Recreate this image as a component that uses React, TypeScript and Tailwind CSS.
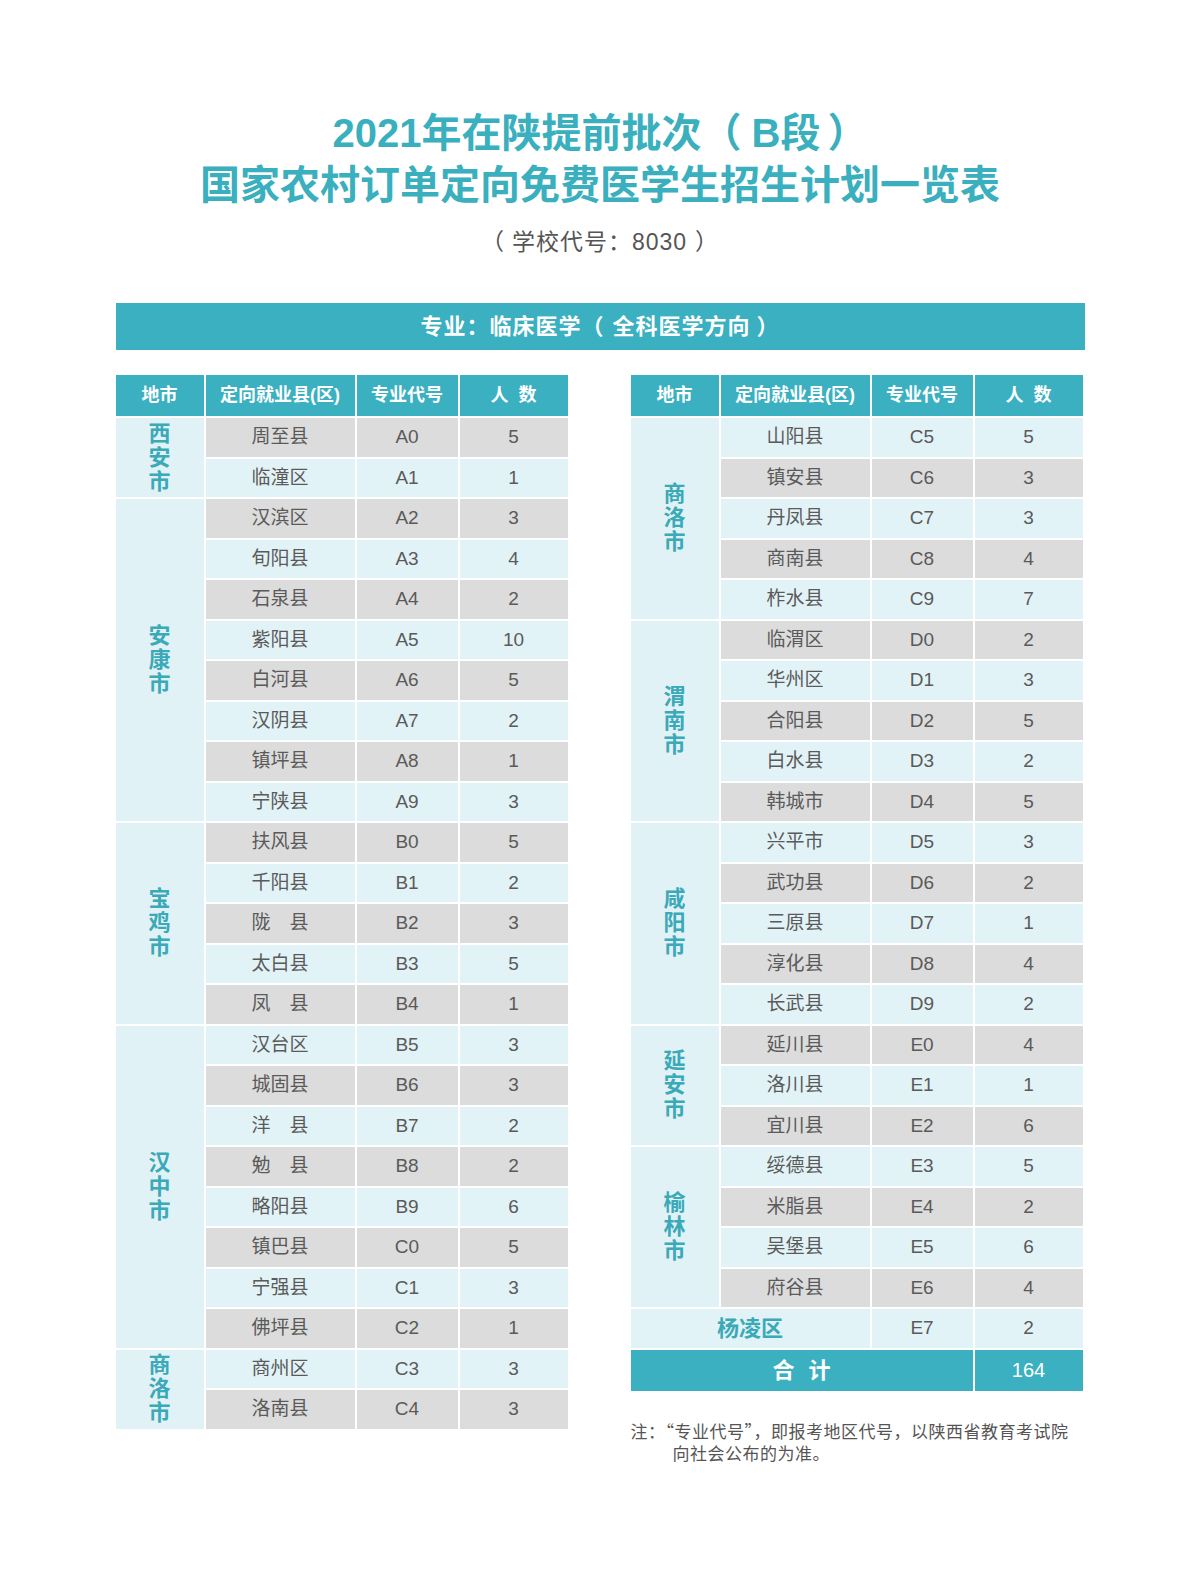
const CJK = "font-['Liberation_Sans','Noto_Sans_CJK_SC',sans-serif]"

type Row = { county: string; code: string; count: string }
type Group = { city: string; span: string; rows: Row[] }

const LEFT: Group[] = [
  {
    city: "西安市", span: "row-span-2", rows: [
      { county: "周至县", code: "A0", count: "5" },
      { county: "临潼区", code: "A1", count: "1" },
    ],
  },
  {
    city: "安康市", span: "row-span-8", rows: [
      { county: "汉滨区", code: "A2", count: "3" },
      { county: "旬阳县", code: "A3", count: "4" },
      { county: "石泉县", code: "A4", count: "2" },
      { county: "紫阳县", code: "A5", count: "10" },
      { county: "白河县", code: "A6", count: "5" },
      { county: "汉阴县", code: "A7", count: "2" },
      { county: "镇坪县", code: "A8", count: "1" },
      { county: "宁陕县", code: "A9", count: "3" },
    ],
  },
  {
    city: "宝鸡市", span: "row-span-5", rows: [
      { county: "扶风县", code: "B0", count: "5" },
      { county: "千阳县", code: "B1", count: "2" },
      { county: "陇　县", code: "B2", count: "3" },
      { county: "太白县", code: "B3", count: "5" },
      { county: "凤　县", code: "B4", count: "1" },
    ],
  },
  {
    city: "汉中市", span: "row-span-8", rows: [
      { county: "汉台区", code: "B5", count: "3" },
      { county: "城固县", code: "B6", count: "3" },
      { county: "洋　县", code: "B7", count: "2" },
      { county: "勉　县", code: "B8", count: "2" },
      { county: "略阳县", code: "B9", count: "6" },
      { county: "镇巴县", code: "C0", count: "5" },
      { county: "宁强县", code: "C1", count: "3" },
      { county: "佛坪县", code: "C2", count: "1" },
    ],
  },
  {
    city: "商洛市", span: "row-span-2", rows: [
      { county: "商州区", code: "C3", count: "3" },
      { county: "洛南县", code: "C4", count: "3" },
    ],
  },
]

const RIGHT: Group[] = [
  {
    city: "商洛市", span: "row-span-5", rows: [
      { county: "山阳县", code: "C5", count: "5" },
      { county: "镇安县", code: "C6", count: "3" },
      { county: "丹凤县", code: "C7", count: "3" },
      { county: "商南县", code: "C8", count: "4" },
      { county: "柞水县", code: "C9", count: "7" },
    ],
  },
  {
    city: "渭南市", span: "row-span-5", rows: [
      { county: "临渭区", code: "D0", count: "2" },
      { county: "华州区", code: "D1", count: "3" },
      { county: "合阳县", code: "D2", count: "5" },
      { county: "白水县", code: "D3", count: "2" },
      { county: "韩城市", code: "D4", count: "5" },
    ],
  },
  {
    city: "咸阳市", span: "row-span-5", rows: [
      { county: "兴平市", code: "D5", count: "3" },
      { county: "武功县", code: "D6", count: "2" },
      { county: "三原县", code: "D7", count: "1" },
      { county: "淳化县", code: "D8", count: "4" },
      { county: "长武县", code: "D9", count: "2" },
    ],
  },
  {
    city: "延安市", span: "row-span-3", rows: [
      { county: "延川县", code: "E0", count: "4" },
      { county: "洛川县", code: "E1", count: "1" },
      { county: "宜川县", code: "E2", count: "6" },
    ],
  },
  {
    city: "榆林市", span: "row-span-4", rows: [
      { county: "绥德县", code: "E3", count: "5" },
      { county: "米脂县", code: "E4", count: "2" },
      { county: "吴堡县", code: "E5", count: "6" },
      { county: "府谷县", code: "E6", count: "4" },
    ],
  },
]

function Header() {
  const th = "h-[41px] bg-[#3ab0c1] flex items-center justify-center text-white font-bold text-[18px]"
  return (
    <>
      <div className={th}>地市</div>
      <div className={th}>定向就业县(区)</div>
      <div className={`${th} text-[17px]`}>专业代号</div>
      <div className={`${th} tracking-[10px] pl-[10px]`}>人数</div>
    </>
  )
}

function CityCell({ name, span }: { name: string; span: string }) {
  return (
    <div className={`${span} col-start-1 bg-[#e1f2f6] flex flex-col items-center justify-center text-[#3aa9b8] font-bold text-[22px] leading-[24px]`}>
      {name.split("").map((c, i) => (
        <span key={i}>{c}</span>
      ))}
    </div>
  )
}

function Groups({ groups, offset }: { groups: Group[]; offset: number }) {
  let idx = offset
  return (
    <>
      {groups.map((g) => {
        const start = idx
        idx += g.rows.length
        return <CityBlock key={g.city + g.rows[0].code} g={g} start={start} />
      })}
    </>
  )
}

function CityBlock({ g, start }: { g: Group; start: number }) {
  return (
    <>
      <CityCell name={g.city} span={g.span} />
      {g.rows.map((r, i) => {
        const bg = (start + i) % 2 === 0 ? "bg-[#dcdcdc]" : "bg-[#e2f3f7]"
        const td = `${bg} flex items-center justify-center text-[#5a5a5a] text-[19px]`
        return <Cells key={r.code} td={td} r={r} />
      })}
    </>
  )
}

function Cells({ td, r }: { td: string; r: Row }) {
  return (
    <>
      <div className={td}>{r.county}</div>
      <div className={td}>{r.code}</div>
      <div className={td}>{r.count}</div>
    </>
  )
}

export default function App() {
  return (
    <div className={`min-h-[1571px] bg-white ${CJK}`}>
      <div className="w-[969px] mx-auto pt-[107px]">
        {/* title */}
        <div className="text-center text-[#3aafbe] font-bold text-[40px] leading-[52px]">
          <div>
            2021年在陕提前批次<span className="mr-[10px]">（</span>B段<span className="ml-[7px]">）</span>
          </div>
          <div>国家农村订单定向免费医学生招生计划一览表</div>
        </div>
        <div className="mt-[16px] text-center text-[#555] text-[23px] leading-[30px] tracking-[1px]">
          <span className="mr-[7px]">（</span>学校代号：8030<span className="ml-[8px]">）</span>
        </div>

        <div className="mt-[46px] h-[47px] bg-[#3ab0c1] flex items-center justify-center text-white font-bold text-[22px] tracking-[1px]">
          专业：临床医学<span className="mr-[8px]">（</span>全科医学方向<span className="ml-[6px]">）</span>
        </div>

        <div className="mt-[25px] flex justify-between items-start">
          {/* left table */}
          <div className="w-[454px] grid grid-cols-[88px_149px_101px_108px] gap-[2px] auto-rows-[38.5px] grid-rows-[41px]">
            <Header />
            <Groups groups={LEFT} offset={0} />
          </div>

          {/* right table + note */}
          <div className="w-[454px]">
            <div className="grid grid-cols-[88px_149px_101px_108px] gap-[2px] auto-rows-[38.5px] grid-rows-[41px]">
              <Header />
              <Groups groups={RIGHT} offset={1} />
              <div className="col-span-2 bg-[#e2f3f7] flex items-center justify-center text-[#3aa9b8] font-bold text-[22px]">杨凌区</div>
              <div className="bg-[#e2f3f7] flex items-center justify-center text-[#5a5a5a] text-[19px]">E7</div>
              <div className="bg-[#e2f3f7] flex items-center justify-center text-[#5a5a5a] text-[19px]">2</div>
              <div className="col-span-3 h-[41px] bg-[#3ab0c1] flex items-center justify-center text-white font-bold text-[22px] tracking-[14px] pl-[14px]">合计</div>
              <div className="h-[41px] bg-[#3ab0c1] flex items-center justify-center text-white text-[20px]">164</div>
            </div>
            <div className="mt-[32px] text-[#555] text-[17px] leading-[22px] tracking-[0.5px] font-['Noto_Sans_CJK_SC',sans-serif]">
              <div className="whitespace-nowrap">注：“专业代号”，即报考地区代号，以陕西省教育考试院</div>
              <div className="pl-[42px]">向社会公布的为准。</div>
            </div>
          </div>
        </div>
      </div>
    </div>
  )
}
